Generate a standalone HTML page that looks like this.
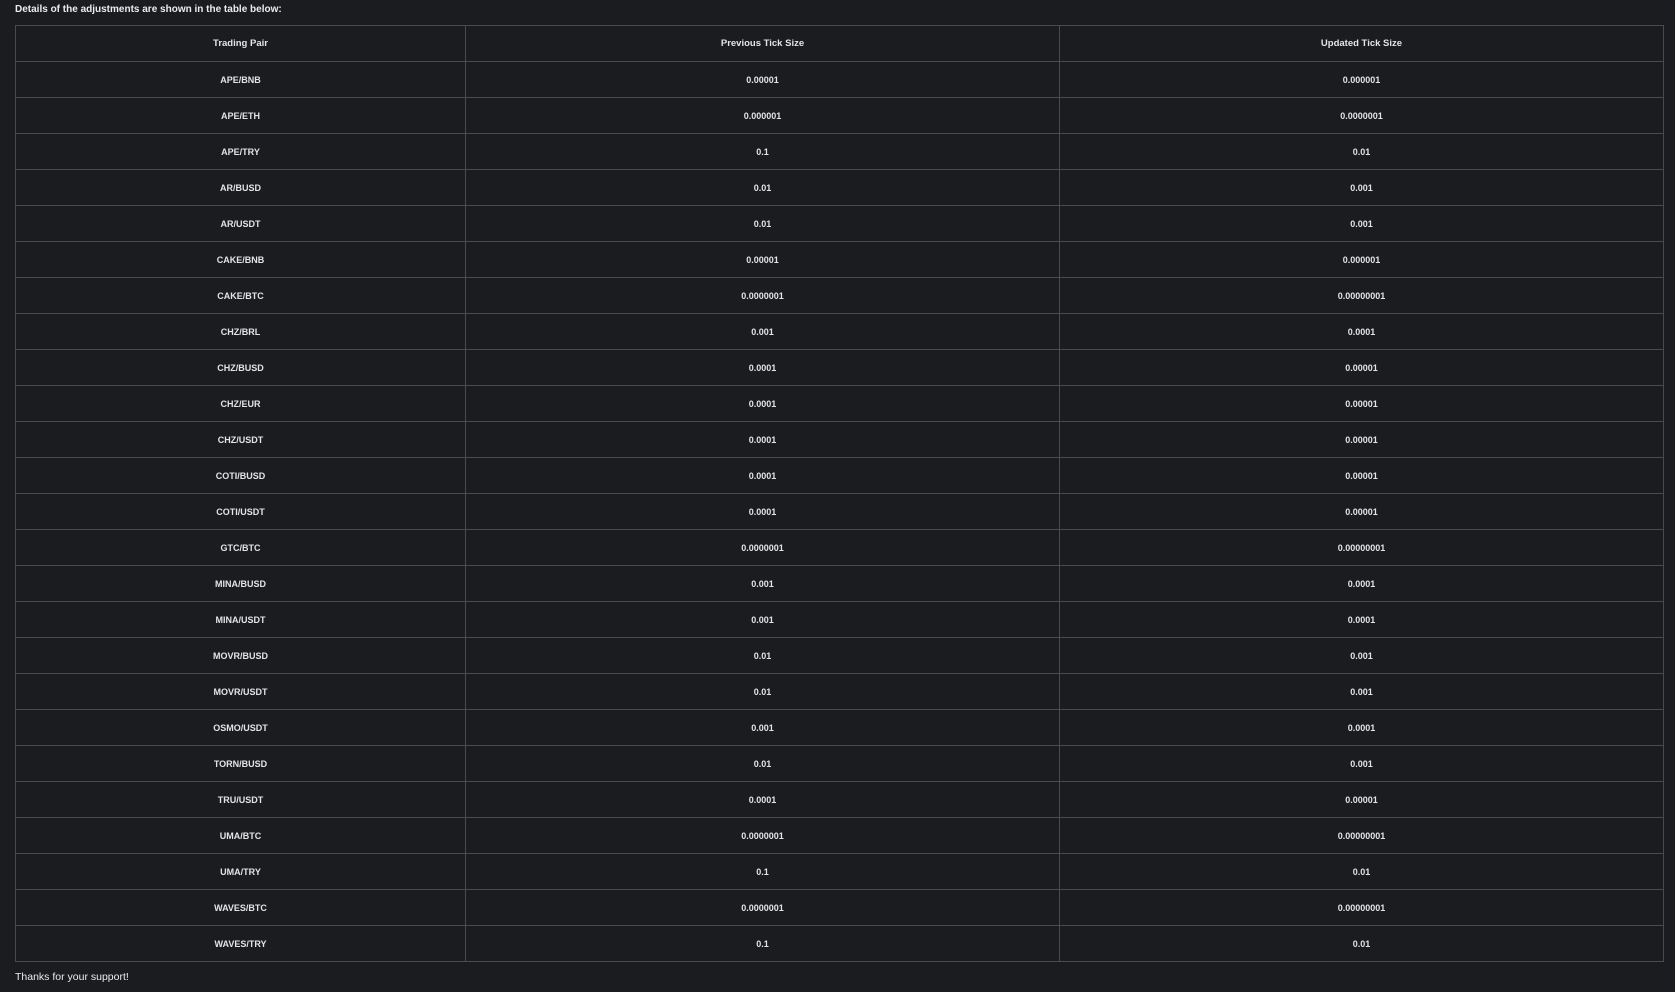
<!DOCTYPE html>
<html><head><meta charset="utf-8"><style>
html,body{margin:0;padding:0;background:#1b1c20;width:1675px;height:992px;overflow:hidden;font-family:"Liberation Sans",sans-serif;color:#eaecef}
.h{position:absolute;left:15px;top:3px;font-size:10px;font-weight:bold;line-height:14px}
.f{position:absolute;left:15px;top:970px;font-size:10.5px;line-height:14px}
table{position:absolute;left:15px;top:25px;border-collapse:collapse;width:1648px;table-layout:fixed}
td{border:1px solid #4a4b51;height:35px;padding:0;text-align:center;font-size:9px;font-weight:bold;color:#e3e4e7;line-height:12px}
tr:first-child td{font-size:9.5px}
</style></head><body>
<div class="h">Details of the adjustments are shown in the table below:</div>
<table>
<colgroup><col style="width:450px"><col style="width:594px"><col style="width:604px"></colgroup>
<tr><td>Trading Pair</td><td>Previous Tick Size</td><td>Updated Tick Size</td></tr>
<tr><td>APE/BNB</td><td>0.00001</td><td>0.000001</td></tr>
<tr><td>APE/ETH</td><td>0.000001</td><td>0.0000001</td></tr>
<tr><td>APE/TRY</td><td>0.1</td><td>0.01</td></tr>
<tr><td>AR/BUSD</td><td>0.01</td><td>0.001</td></tr>
<tr><td>AR/USDT</td><td>0.01</td><td>0.001</td></tr>
<tr><td>CAKE/BNB</td><td>0.00001</td><td>0.000001</td></tr>
<tr><td>CAKE/BTC</td><td>0.0000001</td><td>0.00000001</td></tr>
<tr><td>CHZ/BRL</td><td>0.001</td><td>0.0001</td></tr>
<tr><td>CHZ/BUSD</td><td>0.0001</td><td>0.00001</td></tr>
<tr><td>CHZ/EUR</td><td>0.0001</td><td>0.00001</td></tr>
<tr><td>CHZ/USDT</td><td>0.0001</td><td>0.00001</td></tr>
<tr><td>COTI/BUSD</td><td>0.0001</td><td>0.00001</td></tr>
<tr><td>COTI/USDT</td><td>0.0001</td><td>0.00001</td></tr>
<tr><td>GTC/BTC</td><td>0.0000001</td><td>0.00000001</td></tr>
<tr><td>MINA/BUSD</td><td>0.001</td><td>0.0001</td></tr>
<tr><td>MINA/USDT</td><td>0.001</td><td>0.0001</td></tr>
<tr><td>MOVR/BUSD</td><td>0.01</td><td>0.001</td></tr>
<tr><td>MOVR/USDT</td><td>0.01</td><td>0.001</td></tr>
<tr><td>OSMO/USDT</td><td>0.001</td><td>0.0001</td></tr>
<tr><td>TORN/BUSD</td><td>0.01</td><td>0.001</td></tr>
<tr><td>TRU/USDT</td><td>0.0001</td><td>0.00001</td></tr>
<tr><td>UMA/BTC</td><td>0.0000001</td><td>0.00000001</td></tr>
<tr><td>UMA/TRY</td><td>0.1</td><td>0.01</td></tr>
<tr><td>WAVES/BTC</td><td>0.0000001</td><td>0.00000001</td></tr>
<tr><td>WAVES/TRY</td><td>0.1</td><td>0.01</td></tr>
</table>
<div class="f">Thanks for your support!</div>
</body></html>
